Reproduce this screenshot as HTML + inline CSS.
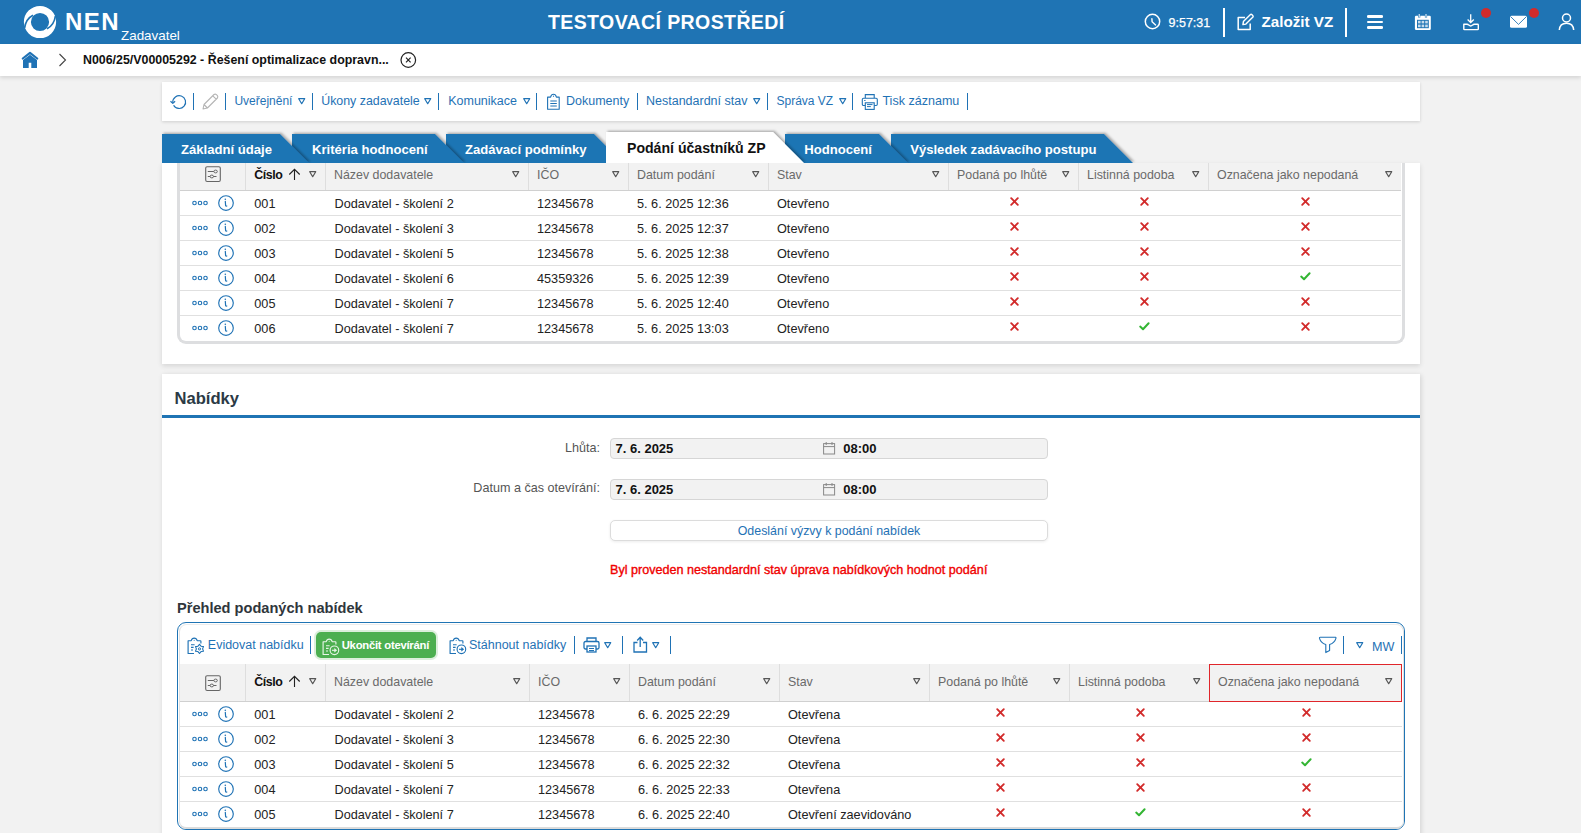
<!DOCTYPE html>
<html><head><meta charset="utf-8"><style>
html,body{margin:0;padding:0;}
body{width:1581px;height:833px;overflow:hidden;position:relative;background:#f2f2f2;font-family:"Liberation Sans", sans-serif;}
.t{position:absolute;white-space:nowrap;line-height:0;}
svg{overflow:visible}
</style></head><body>
<div style="position:absolute;left:0px;top:0px;width:1581px;height:44px;background:#1f74b4"></div>
<svg style="position:absolute;left:22px;top:4px;" width="36" height="36" viewBox="0 0 36 36"><circle cx="18" cy="18" r="12.6" fill="none" stroke="#fff" stroke-width="7"/>
<path d="M11 11.2 C6.5 13.5 3.4 18 2.6 24" fill="none" stroke="#1f74b4" stroke-width="1.7"/>
<path d="M25 24.8 C29.5 22.5 32.6 18 33.4 12" fill="none" stroke="#1f74b4" stroke-width="1.7"/></svg>
<div class="t" style="left:65px;top:22px;font-size:24px;font-weight:700;color:#fff;letter-spacing:1.5px;">NEN</div>
<div class="t" style="left:121px;top:36px;font-size:13.4px;font-weight:400;color:#fff;">Zadavatel</div>
<div class="t" style="left:548px;top:22px;font-size:19.5px;font-weight:700;color:#fff;letter-spacing:0.4px;">TESTOVACÍ PROSTŘEDÍ</div>
<svg style="position:absolute;left:1144px;top:13px;" width="18" height="18" viewBox="0 0 18 18"><circle cx="8.5" cy="8.5" r="7.2" fill="none" stroke="#fff" stroke-width="1.5"/><path d="M7.9 5.6 L8.1 8.8 L11.6 11.9" stroke="#fff" stroke-width="1.4" fill="none" stroke-linecap="round" stroke-linejoin="round"/></svg>
<div class="t" style="left:1168.5px;top:23px;font-size:12.5px;font-weight:400;color:#fff;-webkit-text-stroke:0.25px #fff">9:57:31</div>
<div style="position:absolute;left:1223px;top:8px;width:2px;height:29px;background:#fff"></div>
<svg style="position:absolute;left:1237px;top:13px;" width="18" height="18" viewBox="0 0 18 18"><path d="M8 4.6 H1.2 V16.6 H13.2 V10.6" fill="none" stroke="#fff" stroke-width="1.5" stroke-linejoin="round"/><path d="M5.9 11.6 L6.4 8.6 L13.2 1.8 Q14.1 0.9 15 1.8 L15.7 2.5 Q16.6 3.4 15.7 4.3 L8.9 11.1 Z" fill="none" stroke="#fff" stroke-width="1.4" stroke-linejoin="round"/></svg>
<div class="t" style="left:1261.5px;top:22px;font-size:15.2px;font-weight:700;color:#fff;">Založit VZ</div>
<div style="position:absolute;left:1345px;top:8px;width:2px;height:29px;background:#fff"></div>
<div style="position:absolute;left:1367px;top:15.2px;width:16px;height:2.7px;background:#fff;border-radius:1.3px"></div>
<div style="position:absolute;left:1367px;top:20.6px;width:16px;height:2.7px;background:#fff;border-radius:1.3px"></div>
<div style="position:absolute;left:1367px;top:26px;width:16px;height:2.7px;background:#fff;border-radius:1.3px"></div>
<svg style="position:absolute;left:1414px;top:13px;" width="18" height="18" viewBox="0 0 18 18"><rect x="0.9" y="2.8" width="15.9" height="14.2" rx="1.3" fill="#fff"/><rect x="3" y="6.8" width="11.8" height="8.4" fill="#1f74b4"/><path d="M5.2 0.9 V4.4 M12 0.9 V4.4" stroke="#1f74b4" stroke-width="2.2"/><path d="M5.2 1 V4.2 M12 1 V4.2" stroke="#fff" stroke-width="1"/><g fill="#fff" opacity="0.75"><rect x="4" y="7.8" width="2.6" height="2.6"/><rect x="7.6" y="7.8" width="2.6" height="2.6"/><rect x="11.2" y="7.8" width="2.6" height="2.6"/><rect x="4" y="11.6" width="2.6" height="2.6"/><rect x="7.6" y="11.6" width="2.6" height="2.6"/><rect x="11.2" y="11.6" width="2.6" height="2.6"/></g></svg>
<svg style="position:absolute;left:1462px;top:13px;" width="18" height="18" viewBox="0 0 18 18"><path d="M8.7 1.2 V9.4 M5.6 6.5 L8.7 9.5 L11.8 6.5" fill="none" stroke="#fff" stroke-width="1.3"/><path d="M1.8 11.2 H5 Q6 11.2 6.8 12.1 Q8.7 13.8 10.6 12.1 Q11.4 11.2 12.4 11.2 H15.6 Q16.3 11.2 16.3 11.9 V15.9 Q16.3 16.6 15.6 16.6 H2.5 Q1.8 16.6 1.8 15.9 Z" fill="none" stroke="#fff" stroke-width="1.4" stroke-linejoin="round"/></svg>
<div style="position:absolute;left:1481px;top:8px;width:10px;height:10px;background:#d22b2b;border-radius:50%"></div>
<svg style="position:absolute;left:1510px;top:15px;" width="18" height="14" viewBox="0 0 18 14"><rect x="0" y="0.8" width="17" height="12" rx="1.5" fill="#fff"/><path d="M0.6 1.6 L8.5 9.4 L16.4 1.6" fill="none" stroke="#1f74b4" stroke-width="0.9"/></svg>
<div style="position:absolute;left:1529px;top:8px;width:10px;height:10px;background:#d22b2b;border-radius:50%"></div>
<svg style="position:absolute;left:1558px;top:13px;" width="18" height="18" viewBox="0 0 18 18"><circle cx="8.5" cy="5" r="4" fill="none" stroke="#fff" stroke-width="1.5"/><path d="M1.3 17 Q1.8 10.2 8.5 10.2 Q15.2 10.2 15.7 17" fill="none" stroke="#fff" stroke-width="1.5"/></svg>
<div style="position:absolute;left:0px;top:44px;width:1581px;height:32px;background:#fff;box-shadow:0 2px 4px rgba(0,0,0,0.12)"></div>
<svg style="position:absolute;left:21px;top:51px;" width="18" height="18" viewBox="0 0 18 18"><path d="M1.8 7.5 L9 1.8 L16.2 7.5" fill="none" stroke="#1f72b5" stroke-width="2.2" stroke-linecap="round" stroke-linejoin="round"/><path d="M2 9 L9 3.8 L16 9 V17 H10.3 V11.8 H7.7 V17 H2 Z" fill="#1f72b5"/></svg>
<svg style="position:absolute;left:58px;top:53px;" width="10" height="14" viewBox="0 0 10 14"><path d="M1.5 1 L7.5 7 L1.5 13" fill="none" stroke="#444" stroke-width="1.1"/></svg>
<div class="t" style="left:83px;top:60px;font-size:12.4px;font-weight:700;color:#111;">N006/25/V00005292 - Řešení optimalizace dopravn...</div>
<svg style="position:absolute;left:400px;top:52px;" width="17" height="17" viewBox="0 0 17 17"><circle cx="8.3" cy="8" r="7.3" fill="none" stroke="#222" stroke-width="1.2"/><path d="M6 5.7 L10.6 10.3 M10.6 5.7 L6 10.3" stroke="#222" stroke-width="1.2"/></svg>
<div style="position:absolute;left:162px;top:82px;width:1258px;height:39px;background:#fff;box-shadow:0 1px 3px rgba(0,0,0,0.15)"></div>
<svg style="position:absolute;left:169px;top:93px;" width="18" height="16" viewBox="0 0 18 16"><path d="M4.6 12.2 A6.4 6.4 0 1 0 3.8 9.3" fill="none" stroke="#1f72b5" stroke-width="1.2"/><path d="M1.5 8.2 L3.8 10.4 L6.1 8.2" fill="none" stroke="#1f72b5" stroke-width="1.2" stroke-linejoin="round"/></svg>
<div style="position:absolute;left:193px;top:93px;width:1.3px;height:17px;background:#1f72b5"></div>
<svg style="position:absolute;left:201px;top:93px;" width="18" height="18" viewBox="0 0 18 18"><path d="M2 16 L3 11.5 L13 1.5 Q14.2 0.6 15.4 1.6 L16.4 2.6 Q17.3 3.8 16.4 5 L6.4 15 Z M11.8 2.8 L15.2 6.2 M3 11.5 L6.4 15" fill="none" stroke="#b5b5b5" stroke-width="1.1" stroke-linejoin="round"/></svg>
<div style="position:absolute;left:225px;top:93px;width:1.3px;height:17px;background:#1f72b5"></div>
<div class="t" style="left:234.4px;top:101px;font-size:12.0px;font-weight:400;color:#1f72b5;">Uveřejnění</div>
<svg style="position:absolute;left:297.5px;top:98px;" width="8" height="7" viewBox="0 0 8 7"><path d="M0.7 0.7 H6.7 L3.7 5.7 Z" fill="none" stroke="#1f72b5" stroke-width="1.2" stroke-linejoin="round"/></svg>
<div style="position:absolute;left:312px;top:93px;width:1.3px;height:17px;background:#1f72b5"></div>
<div class="t" style="left:321.2px;top:101px;font-size:12.4px;font-weight:400;color:#1f72b5;">Úkony zadavatele</div>
<svg style="position:absolute;left:424px;top:98px;" width="8" height="7" viewBox="0 0 8 7"><path d="M0.7 0.7 H6.7 L3.7 5.7 Z" fill="none" stroke="#1f72b5" stroke-width="1.2" stroke-linejoin="round"/></svg>
<div style="position:absolute;left:438px;top:93px;width:1.3px;height:17px;background:#1f72b5"></div>
<div class="t" style="left:448.2px;top:101px;font-size:12.5px;font-weight:400;color:#1f72b5;">Komunikace</div>
<svg style="position:absolute;left:522.5px;top:98px;" width="8" height="7" viewBox="0 0 8 7"><path d="M0.7 0.7 H6.7 L3.7 5.7 Z" fill="none" stroke="#1f72b5" stroke-width="1.2" stroke-linejoin="round"/></svg>
<div style="position:absolute;left:536px;top:93px;width:1.3px;height:17px;background:#1f72b5"></div>
<svg style="position:absolute;left:546px;top:93px;" width="16" height="18" viewBox="0 0 16 18"><path d="M1.6 4.1 H4.6 Q5.3 1.2 7.5 1.2 Q9.7 1.2 10.4 4.1 H13.2 V16.3 H1.6 Z" fill="none" stroke="#1f72b5" stroke-width="1.1" stroke-linejoin="round"/><circle cx="7.5" cy="3.2" r="0.6" fill="#1f72b5"/><path d="M4.3 8 H10.8 M4.3 10.5 H10.8 M4.3 13 H10.8" stroke="#1f72b5" stroke-width="1.1"/></svg>
<div class="t" style="left:566px;top:101px;font-size:12.5px;font-weight:400;color:#1f72b5;">Dokumenty</div>
<div style="position:absolute;left:637px;top:93px;width:1.3px;height:17px;background:#1f72b5"></div>
<div class="t" style="left:646px;top:101px;font-size:12.5px;font-weight:400;color:#1f72b5;">Nestandardní stav</div>
<svg style="position:absolute;left:752.5px;top:98px;" width="8" height="7" viewBox="0 0 8 7"><path d="M0.7 0.7 H6.7 L3.7 5.7 Z" fill="none" stroke="#1f72b5" stroke-width="1.2" stroke-linejoin="round"/></svg>
<div style="position:absolute;left:767px;top:93px;width:1.3px;height:17px;background:#1f72b5"></div>
<div class="t" style="left:776.5px;top:101px;font-size:12.0px;font-weight:400;color:#1f72b5;">Správa VZ</div>
<svg style="position:absolute;left:838.5px;top:98px;" width="8" height="7" viewBox="0 0 8 7"><path d="M0.7 0.7 H6.7 L3.7 5.7 Z" fill="none" stroke="#1f72b5" stroke-width="1.2" stroke-linejoin="round"/></svg>
<div style="position:absolute;left:852px;top:93px;width:1.3px;height:17px;background:#1f72b5"></div>
<svg style="position:absolute;left:861px;top:93px;" width="18" height="18" viewBox="0 0 18 18"><path d="M4.3 5 V1.6 H13.2 V5" fill="none" stroke="#1f72b5" stroke-width="1.1"/><rect x="1.3" y="5.2" width="15" height="7.3" rx="1.2" fill="none" stroke="#1f72b5" stroke-width="1.1"/><rect x="4.3" y="9.8" width="8.9" height="6.6" fill="#fff" stroke="#1f72b5" stroke-width="1.1"/><path d="M6 11.6 H11.5 M6 13.6 H9.8 M3.2 7.5 H4.5" stroke="#1f72b5" stroke-width="1"/></svg>
<div class="t" style="left:882.4px;top:101px;font-size:12.55px;font-weight:400;color:#1f72b5;">Tisk záznamu</div>
<div style="position:absolute;left:967px;top:93px;width:1.3px;height:17px;background:#1f72b5"></div>
<div style="position:absolute;left:162px;top:163px;width:1258px;height:201px;background:#fff;box-shadow:0 2px 5px rgba(0,0,0,0.12)"></div>
<svg style="position:absolute;left:0;top:0" width="1581" height="170" viewBox="0 0 1581 170"><defs><filter id="sh" x="-5%" y="-30%" width="115%" height="160%"><feDropShadow dx="1.5" dy="-1.2" stdDeviation="1.1" flood-color="#000" flood-opacity="0.3"/></filter></defs><polygon points="891,134 1104,134 1133,163 891,163" fill="#1f74b4" filter="url(#sh)"/><polygon points="785,134 879,134 908,163 785,163" fill="#1f74b4" filter="url(#sh)"/><polygon points="446,134 594,134 623,163 446,163" fill="#1f74b4" filter="url(#sh)"/><polygon points="292,134 435,134 464,163 292,163" fill="#1f74b4" filter="url(#sh)"/><polygon points="162,134 280,134 309,163 162,163" fill="#1f74b4" filter="url(#sh)"/><polygon points="606,132 773,132 804,163 606,163" fill="#fff" filter="url(#sh)"/></svg>
<div class="t" style="left:181px;top:150px;font-size:13.1px;font-weight:700;color:#fff;">Základní údaje</div>
<div class="t" style="left:312px;top:150px;font-size:13.1px;font-weight:700;color:#fff;">Kritéria hodnocení</div>
<div class="t" style="left:465px;top:150px;font-size:13.1px;font-weight:700;color:#fff;">Zadávací podmínky</div>
<div class="t" style="left:804.3px;top:150px;font-size:13.1px;font-weight:700;color:#fff;">Hodnocení</div>
<div class="t" style="left:910.2px;top:150px;font-size:13.1px;font-weight:700;color:#fff;">Výsledek zadávacího postupu</div>
<div class="t" style="left:627px;top:148px;font-size:14.1px;font-weight:700;color:#111;">Podání účastníků ZP</div>
<div style="position:absolute;left:162px;top:163px;width:1258px;height:1px;background:#fff"></div>
<div style="position:absolute;left:177px;top:163px;width:1228px;height:181px;box-sizing:border-box;border:3px solid #dddee0;border-top:none;border-radius:0 0 9px 9px;background:#fff"></div>
<div style="position:absolute;left:180px;top:163px;width:1221px;height:27px;background:#f2f2f2"></div>
<div style="position:absolute;left:180px;top:190px;width:1221px;height:1px;background:#d0d0d0"></div>
<div style="position:absolute;left:245px;top:163px;width:1px;height:27px;background:#dedede"></div>
<div style="position:absolute;left:325px;top:163px;width:1px;height:27px;background:#dedede"></div>
<div style="position:absolute;left:528px;top:163px;width:1px;height:27px;background:#dedede"></div>
<div style="position:absolute;left:628px;top:163px;width:1px;height:27px;background:#dedede"></div>
<div style="position:absolute;left:768px;top:163px;width:1px;height:27px;background:#dedede"></div>
<div style="position:absolute;left:948px;top:163px;width:1px;height:27px;background:#dedede"></div>
<div style="position:absolute;left:1078px;top:163px;width:1px;height:27px;background:#dedede"></div>
<div style="position:absolute;left:1208px;top:163px;width:1px;height:27px;background:#dedede"></div>
<svg style="position:absolute;left:205px;top:166px;" width="17" height="17" viewBox="0 0 17 17"><rect x="0.7" y="0.7" width="14.6" height="14.8" rx="1.4" fill="none" stroke="#666" stroke-width="1.1"/><path d="M2.8 5.5 H9 M2.8 10.5 H11.5" stroke="#666" stroke-width="1"/><ellipse cx="10.6" cy="5.5" rx="1.7" ry="1.4" fill="#f2f2f2" stroke="#666" stroke-width="1"/><ellipse cx="6.8" cy="10.5" rx="1.7" ry="1.4" fill="#f2f2f2" stroke="#666" stroke-width="1"/></svg>
<div class="t" style="left:254.3px;top:175px;font-size:12.4px;font-weight:700;color:#111;letter-spacing:-0.45px">Číslo</div>
<svg style="position:absolute;left:289px;top:168px;" width="13" height="13" viewBox="0 0 13 13"><path d="M5.5 12 V1.4 M0.3 6.5 L5.5 1.3 L10.7 6.5" fill="none" stroke="#222" stroke-width="1.1"/></svg>
<svg style="position:absolute;left:308.5px;top:171px;" width="8" height="7" viewBox="0 0 8 7"><path d="M0.7 0.7 H6.7 L3.7 5.7 Z" fill="none" stroke="#555" stroke-width="1.2" stroke-linejoin="round"/></svg>
<div class="t" style="left:334px;top:175px;font-size:12.4px;font-weight:400;color:#6a6a6a;">Název dodavatele</div>
<svg style="position:absolute;left:511.5px;top:171px;" width="8" height="7" viewBox="0 0 8 7"><path d="M0.7 0.7 H6.7 L3.7 5.7 Z" fill="none" stroke="#555" stroke-width="1.2" stroke-linejoin="round"/></svg>
<div class="t" style="left:537px;top:175px;font-size:12.4px;font-weight:400;color:#6a6a6a;">IČO</div>
<svg style="position:absolute;left:611.5px;top:171px;" width="8" height="7" viewBox="0 0 8 7"><path d="M0.7 0.7 H6.7 L3.7 5.7 Z" fill="none" stroke="#555" stroke-width="1.2" stroke-linejoin="round"/></svg>
<div class="t" style="left:637px;top:175px;font-size:12.4px;font-weight:400;color:#6a6a6a;">Datum podání</div>
<svg style="position:absolute;left:751.5px;top:171px;" width="8" height="7" viewBox="0 0 8 7"><path d="M0.7 0.7 H6.7 L3.7 5.7 Z" fill="none" stroke="#555" stroke-width="1.2" stroke-linejoin="round"/></svg>
<div class="t" style="left:777px;top:175px;font-size:12.4px;font-weight:400;color:#6a6a6a;">Stav</div>
<svg style="position:absolute;left:931.5px;top:171px;" width="8" height="7" viewBox="0 0 8 7"><path d="M0.7 0.7 H6.7 L3.7 5.7 Z" fill="none" stroke="#555" stroke-width="1.2" stroke-linejoin="round"/></svg>
<div class="t" style="left:957px;top:175px;font-size:12.4px;font-weight:400;color:#6a6a6a;">Podaná po lhůtě</div>
<svg style="position:absolute;left:1061.5px;top:171px;" width="8" height="7" viewBox="0 0 8 7"><path d="M0.7 0.7 H6.7 L3.7 5.7 Z" fill="none" stroke="#555" stroke-width="1.2" stroke-linejoin="round"/></svg>
<div class="t" style="left:1087px;top:175px;font-size:12.4px;font-weight:400;color:#6a6a6a;">Listinná podoba</div>
<svg style="position:absolute;left:1191.5px;top:171px;" width="8" height="7" viewBox="0 0 8 7"><path d="M0.7 0.7 H6.7 L3.7 5.7 Z" fill="none" stroke="#555" stroke-width="1.2" stroke-linejoin="round"/></svg>
<div class="t" style="left:1217px;top:175px;font-size:12.4px;font-weight:400;color:#6a6a6a;">Označena jako nepodaná</div>
<svg style="position:absolute;left:1384.5px;top:171px;" width="8" height="7" viewBox="0 0 8 7"><path d="M0.7 0.7 H6.7 L3.7 5.7 Z" fill="none" stroke="#555" stroke-width="1.2" stroke-linejoin="round"/></svg>
<div style="position:absolute;left:180px;top:215px;width:1221px;height:1px;background:#e0e0e0"></div>
<svg style="position:absolute;left:191.5px;top:200px;" width="18" height="8" viewBox="0 0 18 8"><circle cx="2.5" cy="3" r="1.75" fill="none" stroke="#1f72b5" stroke-width="1.15"/><circle cx="8" cy="3" r="1.75" fill="none" stroke="#1f72b5" stroke-width="1.15"/><circle cx="13.5" cy="3" r="1.75" fill="none" stroke="#1f72b5" stroke-width="1.15"/></svg>
<svg style="position:absolute;left:218px;top:195px;" width="18" height="18" viewBox="0 0 18 18"><circle cx="8" cy="8" r="7.3" fill="none" stroke="#1f72b5" stroke-width="1.15"/><path d="M7.3 6.3 L7.6 10.3 Q7.8 11.4 8.8 11" fill="none" stroke="#1f72b5" stroke-width="1.2" stroke-linecap="round"/><circle cx="7.3" cy="4.3" r="0.8" fill="#1f72b5"/></svg>
<div class="t" style="left:254.3px;top:204px;font-size:12.7px;font-weight:400;color:#222222;">001</div>
<div class="t" style="left:334.5px;top:204px;font-size:12.7px;font-weight:400;color:#222222;">Dodavatel - školení 2</div>
<div class="t" style="left:537px;top:204px;font-size:12.7px;font-weight:400;color:#222222;">12345678</div>
<div class="t" style="left:637px;top:204px;font-size:12.7px;font-weight:400;color:#222222;">5. 6. 2025 12:36</div>
<div class="t" style="left:777px;top:204px;font-size:12.7px;font-weight:400;color:#222222;">Otevřeno</div>
<svg style="position:absolute;left:1009.5px;top:197.0px;" width="9" height="9" viewBox="0 0 9 9"><path d="M1.2 1.2 L7.8 7.8 M7.8 1.2 L1.2 7.8" stroke="#d22b2b" stroke-width="1.9" stroke-linecap="round"/></svg>
<svg style="position:absolute;left:1139.5px;top:197.0px;" width="9" height="9" viewBox="0 0 9 9"><path d="M1.2 1.2 L7.8 7.8 M7.8 1.2 L1.2 7.8" stroke="#d22b2b" stroke-width="1.9" stroke-linecap="round"/></svg>
<svg style="position:absolute;left:1301.0px;top:197.0px;" width="9" height="9" viewBox="0 0 9 9"><path d="M1.2 1.2 L7.8 7.8 M7.8 1.2 L1.2 7.8" stroke="#d22b2b" stroke-width="1.9" stroke-linecap="round"/></svg>
<div style="position:absolute;left:180px;top:240px;width:1221px;height:1px;background:#e0e0e0"></div>
<svg style="position:absolute;left:191.5px;top:225px;" width="18" height="8" viewBox="0 0 18 8"><circle cx="2.5" cy="3" r="1.75" fill="none" stroke="#1f72b5" stroke-width="1.15"/><circle cx="8" cy="3" r="1.75" fill="none" stroke="#1f72b5" stroke-width="1.15"/><circle cx="13.5" cy="3" r="1.75" fill="none" stroke="#1f72b5" stroke-width="1.15"/></svg>
<svg style="position:absolute;left:218px;top:220px;" width="18" height="18" viewBox="0 0 18 18"><circle cx="8" cy="8" r="7.3" fill="none" stroke="#1f72b5" stroke-width="1.15"/><path d="M7.3 6.3 L7.6 10.3 Q7.8 11.4 8.8 11" fill="none" stroke="#1f72b5" stroke-width="1.2" stroke-linecap="round"/><circle cx="7.3" cy="4.3" r="0.8" fill="#1f72b5"/></svg>
<div class="t" style="left:254.3px;top:229px;font-size:12.7px;font-weight:400;color:#222222;">002</div>
<div class="t" style="left:334.5px;top:229px;font-size:12.7px;font-weight:400;color:#222222;">Dodavatel - školení 3</div>
<div class="t" style="left:537px;top:229px;font-size:12.7px;font-weight:400;color:#222222;">12345678</div>
<div class="t" style="left:637px;top:229px;font-size:12.7px;font-weight:400;color:#222222;">5. 6. 2025 12:37</div>
<div class="t" style="left:777px;top:229px;font-size:12.7px;font-weight:400;color:#222222;">Otevřeno</div>
<svg style="position:absolute;left:1009.5px;top:222.0px;" width="9" height="9" viewBox="0 0 9 9"><path d="M1.2 1.2 L7.8 7.8 M7.8 1.2 L1.2 7.8" stroke="#d22b2b" stroke-width="1.9" stroke-linecap="round"/></svg>
<svg style="position:absolute;left:1139.5px;top:222.0px;" width="9" height="9" viewBox="0 0 9 9"><path d="M1.2 1.2 L7.8 7.8 M7.8 1.2 L1.2 7.8" stroke="#d22b2b" stroke-width="1.9" stroke-linecap="round"/></svg>
<svg style="position:absolute;left:1301.0px;top:222.0px;" width="9" height="9" viewBox="0 0 9 9"><path d="M1.2 1.2 L7.8 7.8 M7.8 1.2 L1.2 7.8" stroke="#d22b2b" stroke-width="1.9" stroke-linecap="round"/></svg>
<div style="position:absolute;left:180px;top:265px;width:1221px;height:1px;background:#e0e0e0"></div>
<svg style="position:absolute;left:191.5px;top:250px;" width="18" height="8" viewBox="0 0 18 8"><circle cx="2.5" cy="3" r="1.75" fill="none" stroke="#1f72b5" stroke-width="1.15"/><circle cx="8" cy="3" r="1.75" fill="none" stroke="#1f72b5" stroke-width="1.15"/><circle cx="13.5" cy="3" r="1.75" fill="none" stroke="#1f72b5" stroke-width="1.15"/></svg>
<svg style="position:absolute;left:218px;top:245px;" width="18" height="18" viewBox="0 0 18 18"><circle cx="8" cy="8" r="7.3" fill="none" stroke="#1f72b5" stroke-width="1.15"/><path d="M7.3 6.3 L7.6 10.3 Q7.8 11.4 8.8 11" fill="none" stroke="#1f72b5" stroke-width="1.2" stroke-linecap="round"/><circle cx="7.3" cy="4.3" r="0.8" fill="#1f72b5"/></svg>
<div class="t" style="left:254.3px;top:254px;font-size:12.7px;font-weight:400;color:#222222;">003</div>
<div class="t" style="left:334.5px;top:254px;font-size:12.7px;font-weight:400;color:#222222;">Dodavatel - školení 5</div>
<div class="t" style="left:537px;top:254px;font-size:12.7px;font-weight:400;color:#222222;">12345678</div>
<div class="t" style="left:637px;top:254px;font-size:12.7px;font-weight:400;color:#222222;">5. 6. 2025 12:38</div>
<div class="t" style="left:777px;top:254px;font-size:12.7px;font-weight:400;color:#222222;">Otevřeno</div>
<svg style="position:absolute;left:1009.5px;top:247.0px;" width="9" height="9" viewBox="0 0 9 9"><path d="M1.2 1.2 L7.8 7.8 M7.8 1.2 L1.2 7.8" stroke="#d22b2b" stroke-width="1.9" stroke-linecap="round"/></svg>
<svg style="position:absolute;left:1139.5px;top:247.0px;" width="9" height="9" viewBox="0 0 9 9"><path d="M1.2 1.2 L7.8 7.8 M7.8 1.2 L1.2 7.8" stroke="#d22b2b" stroke-width="1.9" stroke-linecap="round"/></svg>
<svg style="position:absolute;left:1301.0px;top:247.0px;" width="9" height="9" viewBox="0 0 9 9"><path d="M1.2 1.2 L7.8 7.8 M7.8 1.2 L1.2 7.8" stroke="#d22b2b" stroke-width="1.9" stroke-linecap="round"/></svg>
<div style="position:absolute;left:180px;top:290px;width:1221px;height:1px;background:#e0e0e0"></div>
<svg style="position:absolute;left:191.5px;top:275px;" width="18" height="8" viewBox="0 0 18 8"><circle cx="2.5" cy="3" r="1.75" fill="none" stroke="#1f72b5" stroke-width="1.15"/><circle cx="8" cy="3" r="1.75" fill="none" stroke="#1f72b5" stroke-width="1.15"/><circle cx="13.5" cy="3" r="1.75" fill="none" stroke="#1f72b5" stroke-width="1.15"/></svg>
<svg style="position:absolute;left:218px;top:270px;" width="18" height="18" viewBox="0 0 18 18"><circle cx="8" cy="8" r="7.3" fill="none" stroke="#1f72b5" stroke-width="1.15"/><path d="M7.3 6.3 L7.6 10.3 Q7.8 11.4 8.8 11" fill="none" stroke="#1f72b5" stroke-width="1.2" stroke-linecap="round"/><circle cx="7.3" cy="4.3" r="0.8" fill="#1f72b5"/></svg>
<div class="t" style="left:254.3px;top:279px;font-size:12.7px;font-weight:400;color:#222222;">004</div>
<div class="t" style="left:334.5px;top:279px;font-size:12.7px;font-weight:400;color:#222222;">Dodavatel - školení 6</div>
<div class="t" style="left:537px;top:279px;font-size:12.7px;font-weight:400;color:#222222;">45359326</div>
<div class="t" style="left:637px;top:279px;font-size:12.7px;font-weight:400;color:#222222;">5. 6. 2025 12:39</div>
<div class="t" style="left:777px;top:279px;font-size:12.7px;font-weight:400;color:#222222;">Otevřeno</div>
<svg style="position:absolute;left:1009.5px;top:272.0px;" width="9" height="9" viewBox="0 0 9 9"><path d="M1.2 1.2 L7.8 7.8 M7.8 1.2 L1.2 7.8" stroke="#d22b2b" stroke-width="1.9" stroke-linecap="round"/></svg>
<svg style="position:absolute;left:1139.5px;top:272.0px;" width="9" height="9" viewBox="0 0 9 9"><path d="M1.2 1.2 L7.8 7.8 M7.8 1.2 L1.2 7.8" stroke="#d22b2b" stroke-width="1.9" stroke-linecap="round"/></svg>
<svg style="position:absolute;left:1300.0px;top:272.0px;" width="11" height="9" viewBox="0 0 11 9"><path d="M1.2 4.6 L4 7.2 L9.6 1.2" fill="none" stroke="#33b533" stroke-width="2" stroke-linecap="round" stroke-linejoin="round"/></svg>
<div style="position:absolute;left:180px;top:315px;width:1221px;height:1px;background:#e0e0e0"></div>
<svg style="position:absolute;left:191.5px;top:300px;" width="18" height="8" viewBox="0 0 18 8"><circle cx="2.5" cy="3" r="1.75" fill="none" stroke="#1f72b5" stroke-width="1.15"/><circle cx="8" cy="3" r="1.75" fill="none" stroke="#1f72b5" stroke-width="1.15"/><circle cx="13.5" cy="3" r="1.75" fill="none" stroke="#1f72b5" stroke-width="1.15"/></svg>
<svg style="position:absolute;left:218px;top:295px;" width="18" height="18" viewBox="0 0 18 18"><circle cx="8" cy="8" r="7.3" fill="none" stroke="#1f72b5" stroke-width="1.15"/><path d="M7.3 6.3 L7.6 10.3 Q7.8 11.4 8.8 11" fill="none" stroke="#1f72b5" stroke-width="1.2" stroke-linecap="round"/><circle cx="7.3" cy="4.3" r="0.8" fill="#1f72b5"/></svg>
<div class="t" style="left:254.3px;top:304px;font-size:12.7px;font-weight:400;color:#222222;">005</div>
<div class="t" style="left:334.5px;top:304px;font-size:12.7px;font-weight:400;color:#222222;">Dodavatel - školení 7</div>
<div class="t" style="left:537px;top:304px;font-size:12.7px;font-weight:400;color:#222222;">12345678</div>
<div class="t" style="left:637px;top:304px;font-size:12.7px;font-weight:400;color:#222222;">5. 6. 2025 12:40</div>
<div class="t" style="left:777px;top:304px;font-size:12.7px;font-weight:400;color:#222222;">Otevřeno</div>
<svg style="position:absolute;left:1009.5px;top:297.0px;" width="9" height="9" viewBox="0 0 9 9"><path d="M1.2 1.2 L7.8 7.8 M7.8 1.2 L1.2 7.8" stroke="#d22b2b" stroke-width="1.9" stroke-linecap="round"/></svg>
<svg style="position:absolute;left:1139.5px;top:297.0px;" width="9" height="9" viewBox="0 0 9 9"><path d="M1.2 1.2 L7.8 7.8 M7.8 1.2 L1.2 7.8" stroke="#d22b2b" stroke-width="1.9" stroke-linecap="round"/></svg>
<svg style="position:absolute;left:1301.0px;top:297.0px;" width="9" height="9" viewBox="0 0 9 9"><path d="M1.2 1.2 L7.8 7.8 M7.8 1.2 L1.2 7.8" stroke="#d22b2b" stroke-width="1.9" stroke-linecap="round"/></svg>
<svg style="position:absolute;left:191.5px;top:325px;" width="18" height="8" viewBox="0 0 18 8"><circle cx="2.5" cy="3" r="1.75" fill="none" stroke="#1f72b5" stroke-width="1.15"/><circle cx="8" cy="3" r="1.75" fill="none" stroke="#1f72b5" stroke-width="1.15"/><circle cx="13.5" cy="3" r="1.75" fill="none" stroke="#1f72b5" stroke-width="1.15"/></svg>
<svg style="position:absolute;left:218px;top:320px;" width="18" height="18" viewBox="0 0 18 18"><circle cx="8" cy="8" r="7.3" fill="none" stroke="#1f72b5" stroke-width="1.15"/><path d="M7.3 6.3 L7.6 10.3 Q7.8 11.4 8.8 11" fill="none" stroke="#1f72b5" stroke-width="1.2" stroke-linecap="round"/><circle cx="7.3" cy="4.3" r="0.8" fill="#1f72b5"/></svg>
<div class="t" style="left:254.3px;top:329px;font-size:12.7px;font-weight:400;color:#222222;">006</div>
<div class="t" style="left:334.5px;top:329px;font-size:12.7px;font-weight:400;color:#222222;">Dodavatel - školení 7</div>
<div class="t" style="left:537px;top:329px;font-size:12.7px;font-weight:400;color:#222222;">12345678</div>
<div class="t" style="left:637px;top:329px;font-size:12.7px;font-weight:400;color:#222222;">5. 6. 2025 13:03</div>
<div class="t" style="left:777px;top:329px;font-size:12.7px;font-weight:400;color:#222222;">Otevřeno</div>
<svg style="position:absolute;left:1009.5px;top:322.0px;" width="9" height="9" viewBox="0 0 9 9"><path d="M1.2 1.2 L7.8 7.8 M7.8 1.2 L1.2 7.8" stroke="#d22b2b" stroke-width="1.9" stroke-linecap="round"/></svg>
<svg style="position:absolute;left:1138.5px;top:322.0px;" width="11" height="9" viewBox="0 0 11 9"><path d="M1.2 4.6 L4 7.2 L9.6 1.2" fill="none" stroke="#33b533" stroke-width="2" stroke-linecap="round" stroke-linejoin="round"/></svg>
<svg style="position:absolute;left:1301.0px;top:322.0px;" width="9" height="9" viewBox="0 0 9 9"><path d="M1.2 1.2 L7.8 7.8 M7.8 1.2 L1.2 7.8" stroke="#d22b2b" stroke-width="1.9" stroke-linecap="round"/></svg>
<div style="position:absolute;left:162px;top:374px;width:1258px;height:480px;background:#fff;box-shadow:1px 1px 5px rgba(0,0,0,0.14)"></div>
<div class="t" style="left:174.5px;top:399px;font-size:16.6px;font-weight:700;color:#2b3a45;">Nabídky</div>
<div style="position:absolute;left:162px;top:415px;width:1258px;height:3px;background:#1f74b4"></div>
<div class="t" style="left:0px;width:600px;text-align:right;top:447.5px;font-size:12.6px;font-weight:400;color:#555;">Lhůta:</div>
<div class="t" style="left:0px;width:600px;text-align:right;top:487.5px;font-size:12.6px;font-weight:400;color:#555;">Datum a čas otevírání:</div>
<div style="position:absolute;left:610px;top:438px;width:438px;height:20.5px;box-sizing:border-box;border:1px solid #d6d6d6;border-radius:4px;background:#f2f2f2"></div>
<div class="t" style="left:615.5px;top:449px;font-size:13px;font-weight:700;color:#111;">7. 6. 2025</div>
<svg style="position:absolute;left:822.5px;top:442px;" width="13" height="13" viewBox="0 0 13 13"><rect x="0.6" y="1.6" width="11" height="10.4" fill="none" stroke="#888" stroke-width="1"/><path d="M0.6 4.6 H11.6 M3.2 0 V3 M9 0 V3" stroke="#888" stroke-width="1"/></svg>
<div class="t" style="left:843.3px;top:449px;font-size:13px;font-weight:700;color:#111;">08:00</div>
<div style="position:absolute;left:610px;top:479px;width:438px;height:20.5px;box-sizing:border-box;border:1px solid #d6d6d6;border-radius:4px;background:#f2f2f2"></div>
<div class="t" style="left:615.5px;top:490px;font-size:13px;font-weight:700;color:#111;">7. 6. 2025</div>
<svg style="position:absolute;left:822.5px;top:483px;" width="13" height="13" viewBox="0 0 13 13"><rect x="0.6" y="1.6" width="11" height="10.4" fill="none" stroke="#888" stroke-width="1"/><path d="M0.6 4.6 H11.6 M3.2 0 V3 M9 0 V3" stroke="#888" stroke-width="1"/></svg>
<div class="t" style="left:843.3px;top:490px;font-size:13px;font-weight:700;color:#111;">08:00</div>
<div style="position:absolute;left:610px;top:520px;width:438px;height:20.5px;box-sizing:border-box;border:1px solid #dcdcdc;border-radius:5px;background:#fff;box-shadow:0 1px 3px rgba(0,0,0,0.08)"></div>
<div class="t" style="left:529px;width:600px;text-align:center;top:531px;font-size:12.4px;font-weight:400;color:#1f72b5;">Odeslání výzvy k podání nabídek</div>
<div class="t" style="left:610px;top:570px;font-size:12.6px;font-weight:400;color:#f00000;-webkit-text-stroke:0.35px #f00000">Byl proveden nestandardní stav úprava nabídkových hodnot podání</div>
<div class="t" style="left:177px;top:607.5px;font-size:14.6px;font-weight:700;color:#30363c;">Přehled podaných nabídek</div>
<div style="position:absolute;left:177px;top:622px;width:1228px;height:208px;box-sizing:border-box;border:1.5px solid #1f74b4;border-radius:9px;background:#fff"></div>
<div style="position:absolute;left:178.5px;top:623.5px;width:1225px;height:205px;box-sizing:border-box;border-left:1.5px solid #e2e2e2;border-right:1.5px solid #e2e2e2;border-top:1.5px solid #ececec;border-bottom:2.5px solid #dcdcdc;border-radius:7.5px"></div>
<svg style="position:absolute;left:187.1px;top:636.5px;" width="17" height="18" viewBox="0 0 17 18"><path d="M7 16.5 H1.1 V3.7 H4.2 Q4.9 1.1 7.2 1.1 Q9.5 1.1 10.2 3.7 H13.3 Q13.9 3.7 13.9 4.3 V6.6" fill="none" stroke="#1f72b5" stroke-width="1.15" stroke-linejoin="round"/><circle cx="7.2" cy="3.2" r="0.55" fill="#1f72b5"/><path d="M4 7.7 H7.6 M4 10.4 H6.6 M4 13 H6" stroke="#1f72b5" stroke-width="1.15"/><polygon points="12.50,7.30 10.95,9.22 8.52,9.60 9.40,11.90 8.52,14.20 10.95,14.58 12.50,16.50 14.05,14.58 16.48,14.20 15.60,11.90 16.48,9.60 14.05,9.22" fill="#fff" stroke="#1f72b5" stroke-width="1.1" stroke-linejoin="round"/><circle cx="12.5" cy="11.9" r="1.1" fill="none" stroke="#1f72b5" stroke-width="1"/></svg>
<div class="t" style="left:207.8px;top:645px;font-size:12.5px;font-weight:400;color:#1f72b5;">Evidovat nabídku</div>
<div style="position:absolute;left:310px;top:636px;width:1.2px;height:18px;background:#1f72b5"></div>
<div style="position:absolute;left:314.2px;top:630.2px;width:123.6px;height:29.6px;box-sizing:border-box;border-radius:7px;background:#dcefdc"></div>
<div style="position:absolute;left:316.2px;top:632px;width:119.8px;height:26px;border-radius:5px;background:#4caf50"></div>
<svg style="position:absolute;left:322px;top:637.5px;" width="17" height="18" viewBox="0 0 17 18"><path d="M7 16.5 H1.1 V3.7 H4.2 Q4.9 1.1 7.2 1.1 Q9.5 1.1 10.2 3.7 H13.3 Q13.9 3.7 13.9 4.3 V6.6" fill="none" stroke="#e8f5e8" stroke-width="1.15" stroke-linejoin="round"/><circle cx="7.2" cy="3.2" r="0.55" fill="#e8f5e8"/><path d="M4 7.7 H7.6 M4 10.4 H6.6 M4 13 H6" stroke="#e8f5e8" stroke-width="1.15"/><circle cx="12.4" cy="12.3" r="4.3" fill="none" stroke="#e8f5e8" stroke-width="1.15"/><path d="M10 12.3 H14.4" stroke="#e8f5e8" stroke-width="1.1"/><path d="M12.6 10.5 L14.6 12.3 L12.6 14.1 Z" fill="#e8f5e8" stroke="#e8f5e8" stroke-width="0.6" stroke-linejoin="round"/></svg>
<div class="t" style="left:341.7px;top:644.5px;font-size:11.3px;font-weight:700;color:#fff;letter-spacing:-0.25px">Ukončit otevírání</div>
<svg style="position:absolute;left:448.5px;top:636.5px;" width="17" height="18" viewBox="0 0 17 18"><path d="M7 16.5 H1.1 V3.7 H4.2 Q4.9 1.1 7.2 1.1 Q9.5 1.1 10.2 3.7 H13.3 Q13.9 3.7 13.9 4.3 V6.6" fill="none" stroke="#1f72b5" stroke-width="1.15" stroke-linejoin="round"/><circle cx="7.2" cy="3.2" r="0.55" fill="#1f72b5"/><path d="M4 7.7 H7.6 M4 10.4 H6.6 M4 13 H6" stroke="#1f72b5" stroke-width="1.15"/><circle cx="12.4" cy="12.3" r="4.3" fill="none" stroke="#1f72b5" stroke-width="1.15"/><path d="M10 12.3 H14.4" stroke="#1f72b5" stroke-width="1.1"/><path d="M12.6 10.5 L14.6 12.3 L12.6 14.1 Z" fill="#1f72b5" stroke="#1f72b5" stroke-width="0.6" stroke-linejoin="round"/></svg>
<div class="t" style="left:469px;top:645px;font-size:12.5px;font-weight:400;color:#1f72b5;">Stáhnout nabídky</div>
<div style="position:absolute;left:574px;top:636px;width:1.2px;height:18px;background:#1f72b5"></div>
<svg style="position:absolute;left:582.5px;top:637px;" width="18" height="16" viewBox="0 0 18 16"><path d="M4 4.5 V1 H13 V4.5" fill="none" stroke="#1f72b5" stroke-width="1.3"/><rect x="1" y="4.5" width="15" height="7.5" rx="1.5" fill="none" stroke="#1f72b5" stroke-width="1.3"/><rect x="4" y="9" width="9" height="6" fill="#fff" stroke="#1f72b5" stroke-width="1.3"/><path d="M6 11.5 H11 M6 13.5 H11" stroke="#1f72b5" stroke-width="1"/></svg>
<svg style="position:absolute;left:603.5px;top:641.5px;" width="8" height="7" viewBox="0 0 8 7"><path d="M0.7 0.7 H6.7 L3.7 5.7 Z" fill="none" stroke="#1f72b5" stroke-width="1.2" stroke-linejoin="round"/></svg>
<div style="position:absolute;left:621.5px;top:636px;width:1.2px;height:18px;background:#1f72b5"></div>
<svg style="position:absolute;left:632.5px;top:636px;" width="16" height="17" viewBox="0 0 16 17"><path d="M4.5 6.5 H1 V16 H13.5 V6.5 H10" fill="none" stroke="#1f72b5" stroke-width="1.3"/><path d="M7.2 11 V1.5 M4.2 4.5 L7.2 1.3 L10.2 4.5" fill="none" stroke="#1f72b5" stroke-width="1.3"/></svg>
<svg style="position:absolute;left:651.5px;top:641.5px;" width="8" height="7" viewBox="0 0 8 7"><path d="M0.7 0.7 H6.7 L3.7 5.7 Z" fill="none" stroke="#1f72b5" stroke-width="1.2" stroke-linejoin="round"/></svg>
<div style="position:absolute;left:669.5px;top:636px;width:1.2px;height:18px;background:#1f72b5"></div>
<svg style="position:absolute;left:1319px;top:636px;" width="18" height="17" viewBox="0 0 18 17"><path d="M1.2 1.3 H16.6 Q17.2 1.3 16.9 2.4 Q15.6 7 10.6 8.6 V14.6 L6.8 16.6 V8.6 Q1.8 7 0.5 2.4 Q0.3 1.3 1.2 1.3 Z" fill="none" stroke="#1f72b5" stroke-width="1.1" stroke-linejoin="round"/></svg>
<div style="position:absolute;left:1343px;top:636px;width:1.2px;height:18px;background:#1f72b5"></div>
<svg style="position:absolute;left:1356px;top:642px;" width="8" height="7" viewBox="0 0 8 7"><path d="M0.7 0.7 H6.7 L3.7 5.7 Z" fill="none" stroke="#1f72b5" stroke-width="1.2" stroke-linejoin="round"/></svg>
<div class="t" style="left:1372px;top:647px;font-size:12.6px;font-weight:400;color:#1f72b5;">MW</div>
<div style="position:absolute;left:1401px;top:636px;width:1.2px;height:18px;background:#1f72b5"></div>
<div style="position:absolute;left:180px;top:664px;width:1221.5px;height:1px;background:#dedede"></div>
<div style="position:absolute;left:180px;top:664px;width:1221.5px;height:37px;background:#f2f2f2"></div>
<div style="position:absolute;left:180px;top:701px;width:1221.5px;height:1px;background:#d0d0d0"></div>
<div style="position:absolute;left:245px;top:664px;width:1px;height:37px;background:#dedede"></div>
<div style="position:absolute;left:325px;top:664px;width:1px;height:37px;background:#dedede"></div>
<div style="position:absolute;left:529px;top:664px;width:1px;height:37px;background:#dedede"></div>
<div style="position:absolute;left:629px;top:664px;width:1px;height:37px;background:#dedede"></div>
<div style="position:absolute;left:779px;top:664px;width:1px;height:37px;background:#dedede"></div>
<div style="position:absolute;left:929px;top:664px;width:1px;height:37px;background:#dedede"></div>
<div style="position:absolute;left:1069px;top:664px;width:1px;height:37px;background:#dedede"></div>
<div style="position:absolute;left:1209px;top:664px;width:1px;height:37px;background:#dedede"></div>
<svg style="position:absolute;left:205px;top:675px;" width="17" height="17" viewBox="0 0 17 17"><rect x="0.7" y="0.7" width="14.6" height="14.8" rx="1.4" fill="none" stroke="#666" stroke-width="1.1"/><path d="M2.8 5.5 H9 M2.8 10.5 H11.5" stroke="#666" stroke-width="1"/><ellipse cx="10.6" cy="5.5" rx="1.7" ry="1.4" fill="#f2f2f2" stroke="#666" stroke-width="1"/><ellipse cx="6.8" cy="10.5" rx="1.7" ry="1.4" fill="#f2f2f2" stroke="#666" stroke-width="1"/></svg>
<div class="t" style="left:254.3px;top:682px;font-size:12.4px;font-weight:700;color:#111;letter-spacing:-0.45px">Číslo</div>
<svg style="position:absolute;left:289px;top:675px;" width="13" height="13" viewBox="0 0 13 13"><path d="M5.5 12 V1.4 M0.3 6.5 L5.5 1.3 L10.7 6.5" fill="none" stroke="#222" stroke-width="1.1"/></svg>
<svg style="position:absolute;left:308.5px;top:678px;" width="8" height="7" viewBox="0 0 8 7"><path d="M0.7 0.7 H6.7 L3.7 5.7 Z" fill="none" stroke="#555" stroke-width="1.2" stroke-linejoin="round"/></svg>
<div class="t" style="left:334px;top:682px;font-size:12.4px;font-weight:400;color:#6a6a6a;">Název dodavatele</div>
<svg style="position:absolute;left:512.5px;top:678px;" width="8" height="7" viewBox="0 0 8 7"><path d="M0.7 0.7 H6.7 L3.7 5.7 Z" fill="none" stroke="#555" stroke-width="1.2" stroke-linejoin="round"/></svg>
<div class="t" style="left:538px;top:682px;font-size:12.4px;font-weight:400;color:#6a6a6a;">IČO</div>
<svg style="position:absolute;left:612.5px;top:678px;" width="8" height="7" viewBox="0 0 8 7"><path d="M0.7 0.7 H6.7 L3.7 5.7 Z" fill="none" stroke="#555" stroke-width="1.2" stroke-linejoin="round"/></svg>
<div class="t" style="left:638px;top:682px;font-size:12.4px;font-weight:400;color:#6a6a6a;">Datum podání</div>
<svg style="position:absolute;left:762.5px;top:678px;" width="8" height="7" viewBox="0 0 8 7"><path d="M0.7 0.7 H6.7 L3.7 5.7 Z" fill="none" stroke="#555" stroke-width="1.2" stroke-linejoin="round"/></svg>
<div class="t" style="left:788px;top:682px;font-size:12.4px;font-weight:400;color:#6a6a6a;">Stav</div>
<svg style="position:absolute;left:912.5px;top:678px;" width="8" height="7" viewBox="0 0 8 7"><path d="M0.7 0.7 H6.7 L3.7 5.7 Z" fill="none" stroke="#555" stroke-width="1.2" stroke-linejoin="round"/></svg>
<div class="t" style="left:938px;top:682px;font-size:12.4px;font-weight:400;color:#6a6a6a;">Podaná po lhůtě</div>
<svg style="position:absolute;left:1052.5px;top:678px;" width="8" height="7" viewBox="0 0 8 7"><path d="M0.7 0.7 H6.7 L3.7 5.7 Z" fill="none" stroke="#555" stroke-width="1.2" stroke-linejoin="round"/></svg>
<div class="t" style="left:1078px;top:682px;font-size:12.4px;font-weight:400;color:#6a6a6a;">Listinná podoba</div>
<svg style="position:absolute;left:1192.5px;top:678px;" width="8" height="7" viewBox="0 0 8 7"><path d="M0.7 0.7 H6.7 L3.7 5.7 Z" fill="none" stroke="#555" stroke-width="1.2" stroke-linejoin="round"/></svg>
<div class="t" style="left:1218px;top:682px;font-size:12.4px;font-weight:400;color:#6a6a6a;">Označena jako nepodaná</div>
<svg style="position:absolute;left:1385.0px;top:678px;" width="8" height="7" viewBox="0 0 8 7"><path d="M0.7 0.7 H6.7 L3.7 5.7 Z" fill="none" stroke="#555" stroke-width="1.2" stroke-linejoin="round"/></svg>
<div style="position:absolute;left:180px;top:726px;width:1221.5px;height:1px;background:#e0e0e0"></div>
<svg style="position:absolute;left:191.5px;top:711px;" width="18" height="8" viewBox="0 0 18 8"><circle cx="2.5" cy="3" r="1.75" fill="none" stroke="#1f72b5" stroke-width="1.15"/><circle cx="8" cy="3" r="1.75" fill="none" stroke="#1f72b5" stroke-width="1.15"/><circle cx="13.5" cy="3" r="1.75" fill="none" stroke="#1f72b5" stroke-width="1.15"/></svg>
<svg style="position:absolute;left:218px;top:706px;" width="18" height="18" viewBox="0 0 18 18"><circle cx="8" cy="8" r="7.3" fill="none" stroke="#1f72b5" stroke-width="1.15"/><path d="M7.3 6.3 L7.6 10.3 Q7.8 11.4 8.8 11" fill="none" stroke="#1f72b5" stroke-width="1.2" stroke-linecap="round"/><circle cx="7.3" cy="4.3" r="0.8" fill="#1f72b5"/></svg>
<div class="t" style="left:254.3px;top:715px;font-size:12.7px;font-weight:400;color:#222222;">001</div>
<div class="t" style="left:334.5px;top:715px;font-size:12.7px;font-weight:400;color:#222222;">Dodavatel - školení 2</div>
<div class="t" style="left:538px;top:715px;font-size:12.7px;font-weight:400;color:#222222;">12345678</div>
<div class="t" style="left:638px;top:715px;font-size:12.7px;font-weight:400;color:#222222;">6. 6. 2025 22:29</div>
<div class="t" style="left:788px;top:715px;font-size:12.7px;font-weight:400;color:#222222;">Otevřena</div>
<svg style="position:absolute;left:995.5px;top:708.0px;" width="9" height="9" viewBox="0 0 9 9"><path d="M1.2 1.2 L7.8 7.8 M7.8 1.2 L1.2 7.8" stroke="#d22b2b" stroke-width="1.9" stroke-linecap="round"/></svg>
<svg style="position:absolute;left:1135.5px;top:708.0px;" width="9" height="9" viewBox="0 0 9 9"><path d="M1.2 1.2 L7.8 7.8 M7.8 1.2 L1.2 7.8" stroke="#d22b2b" stroke-width="1.9" stroke-linecap="round"/></svg>
<svg style="position:absolute;left:1301.75px;top:708.0px;" width="9" height="9" viewBox="0 0 9 9"><path d="M1.2 1.2 L7.8 7.8 M7.8 1.2 L1.2 7.8" stroke="#d22b2b" stroke-width="1.9" stroke-linecap="round"/></svg>
<div style="position:absolute;left:180px;top:751px;width:1221.5px;height:1px;background:#e0e0e0"></div>
<svg style="position:absolute;left:191.5px;top:736px;" width="18" height="8" viewBox="0 0 18 8"><circle cx="2.5" cy="3" r="1.75" fill="none" stroke="#1f72b5" stroke-width="1.15"/><circle cx="8" cy="3" r="1.75" fill="none" stroke="#1f72b5" stroke-width="1.15"/><circle cx="13.5" cy="3" r="1.75" fill="none" stroke="#1f72b5" stroke-width="1.15"/></svg>
<svg style="position:absolute;left:218px;top:731px;" width="18" height="18" viewBox="0 0 18 18"><circle cx="8" cy="8" r="7.3" fill="none" stroke="#1f72b5" stroke-width="1.15"/><path d="M7.3 6.3 L7.6 10.3 Q7.8 11.4 8.8 11" fill="none" stroke="#1f72b5" stroke-width="1.2" stroke-linecap="round"/><circle cx="7.3" cy="4.3" r="0.8" fill="#1f72b5"/></svg>
<div class="t" style="left:254.3px;top:740px;font-size:12.7px;font-weight:400;color:#222222;">002</div>
<div class="t" style="left:334.5px;top:740px;font-size:12.7px;font-weight:400;color:#222222;">Dodavatel - školení 3</div>
<div class="t" style="left:538px;top:740px;font-size:12.7px;font-weight:400;color:#222222;">12345678</div>
<div class="t" style="left:638px;top:740px;font-size:12.7px;font-weight:400;color:#222222;">6. 6. 2025 22:30</div>
<div class="t" style="left:788px;top:740px;font-size:12.7px;font-weight:400;color:#222222;">Otevřena</div>
<svg style="position:absolute;left:995.5px;top:733.0px;" width="9" height="9" viewBox="0 0 9 9"><path d="M1.2 1.2 L7.8 7.8 M7.8 1.2 L1.2 7.8" stroke="#d22b2b" stroke-width="1.9" stroke-linecap="round"/></svg>
<svg style="position:absolute;left:1135.5px;top:733.0px;" width="9" height="9" viewBox="0 0 9 9"><path d="M1.2 1.2 L7.8 7.8 M7.8 1.2 L1.2 7.8" stroke="#d22b2b" stroke-width="1.9" stroke-linecap="round"/></svg>
<svg style="position:absolute;left:1301.75px;top:733.0px;" width="9" height="9" viewBox="0 0 9 9"><path d="M1.2 1.2 L7.8 7.8 M7.8 1.2 L1.2 7.8" stroke="#d22b2b" stroke-width="1.9" stroke-linecap="round"/></svg>
<div style="position:absolute;left:180px;top:776px;width:1221.5px;height:1px;background:#e0e0e0"></div>
<svg style="position:absolute;left:191.5px;top:761px;" width="18" height="8" viewBox="0 0 18 8"><circle cx="2.5" cy="3" r="1.75" fill="none" stroke="#1f72b5" stroke-width="1.15"/><circle cx="8" cy="3" r="1.75" fill="none" stroke="#1f72b5" stroke-width="1.15"/><circle cx="13.5" cy="3" r="1.75" fill="none" stroke="#1f72b5" stroke-width="1.15"/></svg>
<svg style="position:absolute;left:218px;top:756px;" width="18" height="18" viewBox="0 0 18 18"><circle cx="8" cy="8" r="7.3" fill="none" stroke="#1f72b5" stroke-width="1.15"/><path d="M7.3 6.3 L7.6 10.3 Q7.8 11.4 8.8 11" fill="none" stroke="#1f72b5" stroke-width="1.2" stroke-linecap="round"/><circle cx="7.3" cy="4.3" r="0.8" fill="#1f72b5"/></svg>
<div class="t" style="left:254.3px;top:765px;font-size:12.7px;font-weight:400;color:#222222;">003</div>
<div class="t" style="left:334.5px;top:765px;font-size:12.7px;font-weight:400;color:#222222;">Dodavatel - školení 5</div>
<div class="t" style="left:538px;top:765px;font-size:12.7px;font-weight:400;color:#222222;">12345678</div>
<div class="t" style="left:638px;top:765px;font-size:12.7px;font-weight:400;color:#222222;">6. 6. 2025 22:32</div>
<div class="t" style="left:788px;top:765px;font-size:12.7px;font-weight:400;color:#222222;">Otevřena</div>
<svg style="position:absolute;left:995.5px;top:758.0px;" width="9" height="9" viewBox="0 0 9 9"><path d="M1.2 1.2 L7.8 7.8 M7.8 1.2 L1.2 7.8" stroke="#d22b2b" stroke-width="1.9" stroke-linecap="round"/></svg>
<svg style="position:absolute;left:1135.5px;top:758.0px;" width="9" height="9" viewBox="0 0 9 9"><path d="M1.2 1.2 L7.8 7.8 M7.8 1.2 L1.2 7.8" stroke="#d22b2b" stroke-width="1.9" stroke-linecap="round"/></svg>
<svg style="position:absolute;left:1300.75px;top:758.0px;" width="11" height="9" viewBox="0 0 11 9"><path d="M1.2 4.6 L4 7.2 L9.6 1.2" fill="none" stroke="#33b533" stroke-width="2" stroke-linecap="round" stroke-linejoin="round"/></svg>
<div style="position:absolute;left:180px;top:801px;width:1221.5px;height:1px;background:#e0e0e0"></div>
<svg style="position:absolute;left:191.5px;top:786px;" width="18" height="8" viewBox="0 0 18 8"><circle cx="2.5" cy="3" r="1.75" fill="none" stroke="#1f72b5" stroke-width="1.15"/><circle cx="8" cy="3" r="1.75" fill="none" stroke="#1f72b5" stroke-width="1.15"/><circle cx="13.5" cy="3" r="1.75" fill="none" stroke="#1f72b5" stroke-width="1.15"/></svg>
<svg style="position:absolute;left:218px;top:781px;" width="18" height="18" viewBox="0 0 18 18"><circle cx="8" cy="8" r="7.3" fill="none" stroke="#1f72b5" stroke-width="1.15"/><path d="M7.3 6.3 L7.6 10.3 Q7.8 11.4 8.8 11" fill="none" stroke="#1f72b5" stroke-width="1.2" stroke-linecap="round"/><circle cx="7.3" cy="4.3" r="0.8" fill="#1f72b5"/></svg>
<div class="t" style="left:254.3px;top:790px;font-size:12.7px;font-weight:400;color:#222222;">004</div>
<div class="t" style="left:334.5px;top:790px;font-size:12.7px;font-weight:400;color:#222222;">Dodavatel - školení 7</div>
<div class="t" style="left:538px;top:790px;font-size:12.7px;font-weight:400;color:#222222;">12345678</div>
<div class="t" style="left:638px;top:790px;font-size:12.7px;font-weight:400;color:#222222;">6. 6. 2025 22:33</div>
<div class="t" style="left:788px;top:790px;font-size:12.7px;font-weight:400;color:#222222;">Otevřena</div>
<svg style="position:absolute;left:995.5px;top:783.0px;" width="9" height="9" viewBox="0 0 9 9"><path d="M1.2 1.2 L7.8 7.8 M7.8 1.2 L1.2 7.8" stroke="#d22b2b" stroke-width="1.9" stroke-linecap="round"/></svg>
<svg style="position:absolute;left:1135.5px;top:783.0px;" width="9" height="9" viewBox="0 0 9 9"><path d="M1.2 1.2 L7.8 7.8 M7.8 1.2 L1.2 7.8" stroke="#d22b2b" stroke-width="1.9" stroke-linecap="round"/></svg>
<svg style="position:absolute;left:1301.75px;top:783.0px;" width="9" height="9" viewBox="0 0 9 9"><path d="M1.2 1.2 L7.8 7.8 M7.8 1.2 L1.2 7.8" stroke="#d22b2b" stroke-width="1.9" stroke-linecap="round"/></svg>
<svg style="position:absolute;left:191.5px;top:811px;" width="18" height="8" viewBox="0 0 18 8"><circle cx="2.5" cy="3" r="1.75" fill="none" stroke="#1f72b5" stroke-width="1.15"/><circle cx="8" cy="3" r="1.75" fill="none" stroke="#1f72b5" stroke-width="1.15"/><circle cx="13.5" cy="3" r="1.75" fill="none" stroke="#1f72b5" stroke-width="1.15"/></svg>
<svg style="position:absolute;left:218px;top:806px;" width="18" height="18" viewBox="0 0 18 18"><circle cx="8" cy="8" r="7.3" fill="none" stroke="#1f72b5" stroke-width="1.15"/><path d="M7.3 6.3 L7.6 10.3 Q7.8 11.4 8.8 11" fill="none" stroke="#1f72b5" stroke-width="1.2" stroke-linecap="round"/><circle cx="7.3" cy="4.3" r="0.8" fill="#1f72b5"/></svg>
<div class="t" style="left:254.3px;top:815px;font-size:12.7px;font-weight:400;color:#222222;">005</div>
<div class="t" style="left:334.5px;top:815px;font-size:12.7px;font-weight:400;color:#222222;">Dodavatel - školení 7</div>
<div class="t" style="left:538px;top:815px;font-size:12.7px;font-weight:400;color:#222222;">12345678</div>
<div class="t" style="left:638px;top:815px;font-size:12.7px;font-weight:400;color:#222222;">6. 6. 2025 22:40</div>
<div class="t" style="left:788px;top:815px;font-size:12.7px;font-weight:400;color:#222222;">Otevření zaevidováno</div>
<svg style="position:absolute;left:995.5px;top:808.0px;" width="9" height="9" viewBox="0 0 9 9"><path d="M1.2 1.2 L7.8 7.8 M7.8 1.2 L1.2 7.8" stroke="#d22b2b" stroke-width="1.9" stroke-linecap="round"/></svg>
<svg style="position:absolute;left:1134.5px;top:808.0px;" width="11" height="9" viewBox="0 0 11 9"><path d="M1.2 4.6 L4 7.2 L9.6 1.2" fill="none" stroke="#33b533" stroke-width="2" stroke-linecap="round" stroke-linejoin="round"/></svg>
<svg style="position:absolute;left:1301.75px;top:808.0px;" width="9" height="9" viewBox="0 0 9 9"><path d="M1.2 1.2 L7.8 7.8 M7.8 1.2 L1.2 7.8" stroke="#d22b2b" stroke-width="1.9" stroke-linecap="round"/></svg>
<div style="position:absolute;left:1209px;top:664px;width:192.5px;height:37.5px;box-sizing:border-box;border:1.5px solid #e0262b"></div>
</body></html>
